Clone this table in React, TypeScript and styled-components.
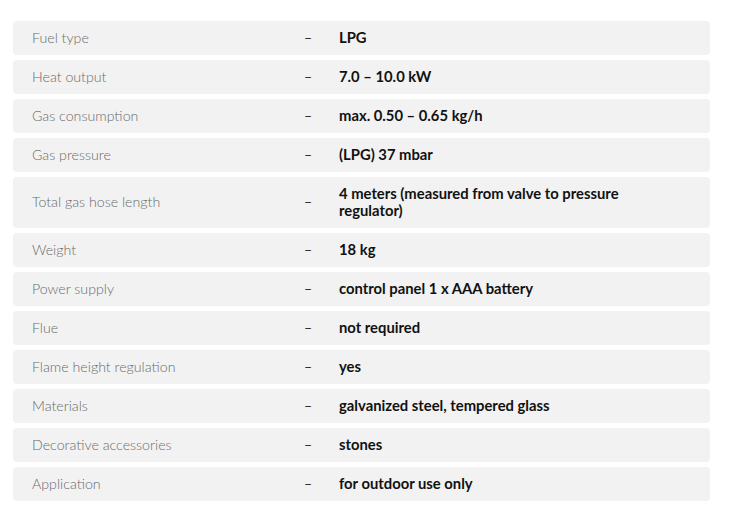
import React from "react";
import styled, { createGlobalStyle } from "styled-components";

const Global = createGlobalStyle`
  html, body { margin: 0; padding: 0; background: #ffffff; }
  body { font-family: "Lato", "Noto Sans", sans-serif; }
`;

const Table = styled.div`
  display: flex;
  flex-direction: column;
  gap: 5px;
  padding: 21px 25px 0 13px;
`;

const Row = styled.div`
  display: grid;
  grid-template-columns: 272px 35px 330px;
  align-items: center;
  background: #f2f2f2;
  border-radius: 4px;
  padding: 7.5px 0 9.5px 19px;
  min-height: 17px;
`;

const Label = styled.div`
  font-size: 14.2px;
  font-weight: 300;
  color: #6a6a6a;
  line-height: 17px;
`;

const Dash = styled.div`
  font-size: 14px;
  color: #222;
  line-height: 17px;
`;

const Value = styled.div`
  font-size: 14.8px;
  font-weight: 700;
  color: #111;
  line-height: 17px;
`;

const specs: [string, string][] = [
  ["Fuel type", "LPG"],
  ["Heat output", "7.0 – 10.0 kW"],
  ["Gas consumption", "max. 0.50 – 0.65 kg/h"],
  ["Gas pressure", "(LPG) 37 mbar"],
  ["Total gas hose length", "4 meters (measured from valve to pressure regulator)"],
  ["Weight", "18 kg"],
  ["Power supply", "control panel 1 x AAA battery"],
  ["Flue", "not required"],
  ["Flame height regulation", "yes"],
  ["Materials", "galvanized steel, tempered glass"],
  ["Decorative accessories", "stones"],
  ["Application", "for outdoor use only"],
];

export default function App() {
  return (
    <>
      <Global />
      <Table>
        {specs.map(([k, v]) => (
          <Row key={k}>
            <Label>{k}</Label>
            <Dash>–</Dash>
            <Value>{v}</Value>
          </Row>
        ))}
      </Table>
    </>
  );
}
